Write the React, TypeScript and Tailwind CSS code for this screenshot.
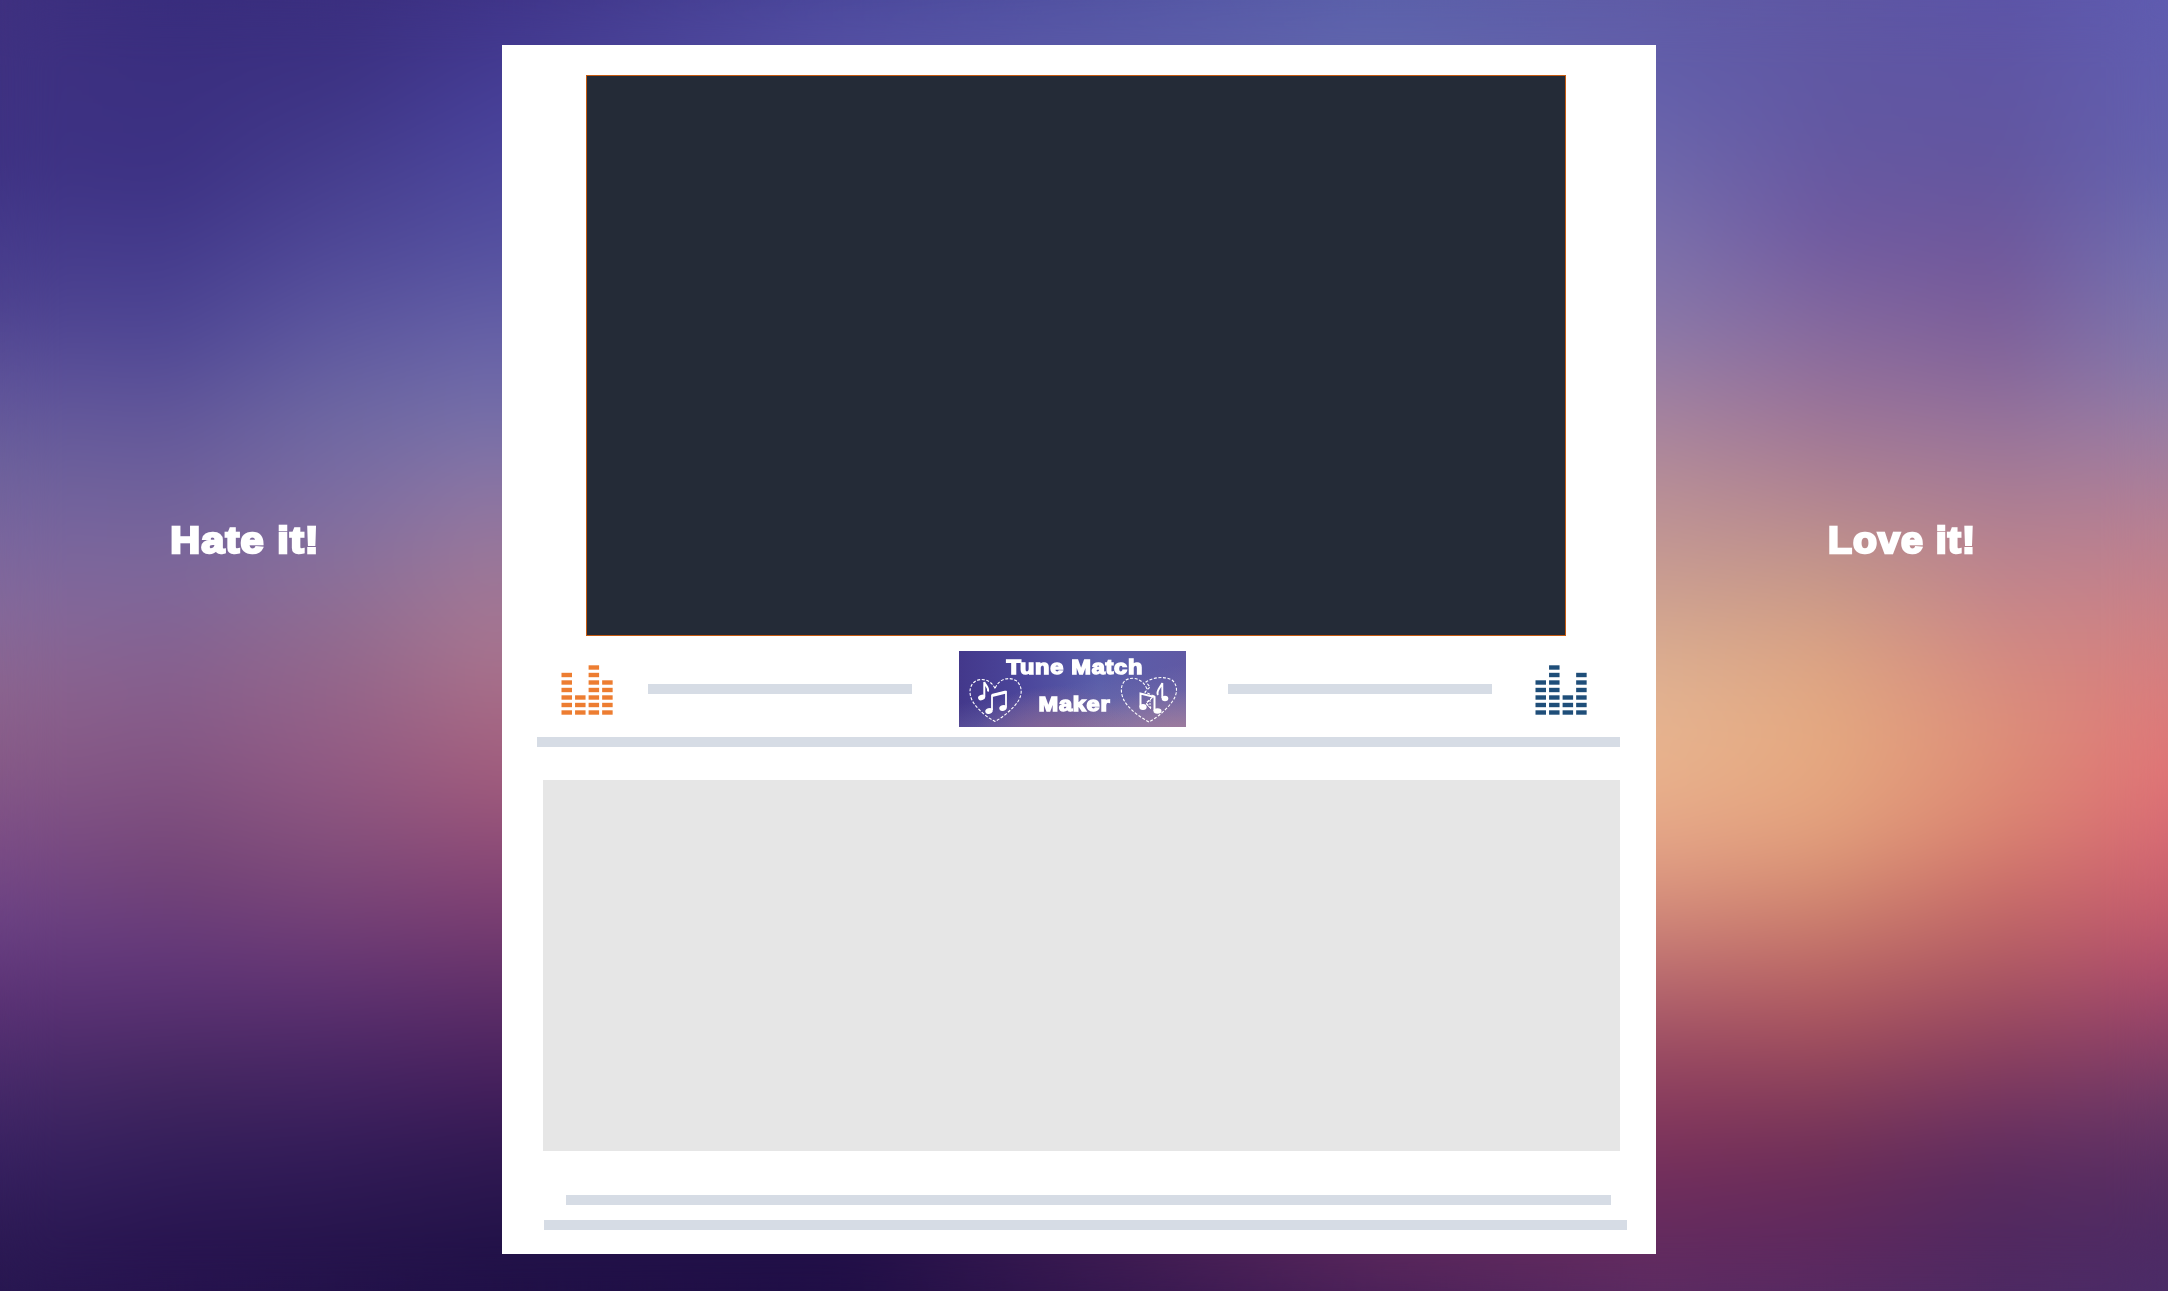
const HEART =
  "M26 11 C22 2 12 0 6 4 C-1 9 0 19 5 26 C10 33 18 40 26 44 C35 39 44 31 49 24 C54 16 53 8 47 3 C40 -1 30 1 26 11 Z";

function Backdrop() {
  return (
    <div className="absolute inset-0" aria-hidden="true">
      <div className="absolute inset-0 bg-[linear-gradient(to_bottom,#3f3180_0px,#3f3384_165px,#44398a_220px,#4c418f_295px,#5f549a_390px,#6d619c_466px,#7a669e_540px,#85699a_614px,#8b648f_690px,#875b88_760px,#7a4c86_850px,#6b4284_920px,#5a3275_1005px,#472a6a_1085px,#372160_1165px,#2c1a54_1245px,#281751_1291px)]" />
      <div className="absolute inset-0 bg-[linear-gradient(to_bottom,#392d7d_0px,#3d3284_175px,#453c8d_257px,#504895_339px,#62579a_420px,#71629b_500px,#7e679a_580px,#87608e_680px,#835583_770px,#744578_870px,#64397a_950px,#573070_1010px,#41265f_1090px,#331e5a_1160px,#291551_1235px,#26134e_1291px)] mask-[linear-gradient(to_right,transparent_0px,black_167px)]" />
      <div className="absolute inset-0 bg-[linear-gradient(to_bottom,#3b2f7f_0px,#3d3384_82px,#453d8d_165px,#4f4897_247px,#5d579f_329px,#6d67a2_412px,#7c6da2_494px,#88709c_560px,#906d92_617px,#94658a_690px,#925a83_770px,#85507c_840px,#764277_910px,#623472_980px,#4a2765_1060px,#331c58_1155px,#27154d_1235px,#23124a_1291px)] mask-[linear-gradient(to_right,transparent_167px,black_335px)]" />
      <div className="absolute inset-0 bg-[linear-gradient(to_bottom,#3f3488_0px,#48419a_123px,#5551a0_247px,#6a65a8_354px,#7971a8_428px,#8b76a4_486px,#9c7899_560px,#a87690_642px,#a76a85_708px,#a05b7c_782px,#8a4876_864px,#753b70_930px,#5c2d67_1004px,#441f5c_1087px,#311952_1153px,#231349_1235px,#201047_1291px)] mask-[linear-gradient(to_right,transparent_335px,black_502px)]" />
      <div className="absolute inset-0 bg-[linear-gradient(to_bottom,#4a479b_0px,#5450a3_45px,#5450a3_400px,#a0607c_780px,#23104a_1200px,#200f46_1291px)] mask-[linear-gradient(to_right,transparent_502px,black_840px)]" />
      <div className="absolute inset-0 bg-[linear-gradient(to_bottom,#5b60aa_0px,#5f65ad_45px,#8b78a8_329px,#e9b38d_766px,#6b2c5d_1180px,#56265b_1254px,#4b2159_1291px)] mask-[linear-gradient(to_right,transparent_840px,black_1380px)]" />
      <div className="absolute inset-0 bg-[linear-gradient(to_bottom,#5f5ba6_0px,#635fab_82px,#6e67ab_165px,#7c70ab_247px,#8b78a8_329px,#a4829f_412px,#b98f96_494px,#c99c91_576px,#d6a98f_634px,#e3b391_700px,#e9b38d_766px,#e5a587_840px,#d58d7b_906px,#bd6e70_971px,#9a4a62_1054px,#7f345b_1136px,#6b2c5d_1202px,#5b2b62_1291px)] mask-[linear-gradient(to_right,transparent_1380px,black_1656px)]" />
      <div className="absolute inset-0 bg-[linear-gradient(to_bottom,#5e57a4_0px,#6258a2_123px,#6f5aa0_231px,#85699e_329px,#9b7498_412px,#b18491_494px,#c69789_576px,#dca383_659px,#e5a980_741px,#e3a17d_823px,#d48b72_889px,#c06e68_955px,#a8545f_1021px,#823c5a_1103px,#6b2d58_1169px,#5f295e_1235px,#562a62_1291px)] mask-[linear-gradient(to_right,transparent_1656px,black_1826px)]" />
      <div className="absolute inset-0 bg-[linear-gradient(to_bottom,#5c54a7_0px,#63569f_165px,#73599b_272px,#83649a_354px,#97739a_428px,#ae7f92_510px,#c4868b_593px,#d48b81_659px,#de9079_741px,#db8672_823px,#cb706a_889px,#ae5963_971px,#8b405f_1054px,#683060_1136px,#562a5e_1194px,#4d2963_1291px)] mask-[linear-gradient(to_right,transparent_1826px,black_1996px)]" />
      <div className="absolute inset-0 bg-[linear-gradient(to_bottom,#5f5cb0_0px,#6562ae_165px,#7370b0_263px,#8578ab_362px,#9c7da2_436px,#b77f93_527px,#cb8086_617px,#d97b7c_700px,#df7376_774px,#d56873_840px,#c55d6e_906px,#ae4d6c_971px,#8e4168_1037px,#6e3966_1103px,#5a2f63_1169px,#4e2b64_1235px,#4b2c68_1291px)] mask-[linear-gradient(to_right,transparent_1996px,black_2168px)]" />
      <div className="absolute inset-0 backdrop-blur-[28px]" />
    </div>
  );
}

function Equalizer({ levels, tone }: { levels: number[]; tone: string }) {
  return (
    <svg className={`mt-[2px] h-[50px] w-[52px] shrink-0 ${tone}`} viewBox="0 0 52 50" fill="currentColor">
      {levels.map((count, col) =>
        Array.from({ length: count }, (_, i) => (
          <rect key={`${col}-${i}`} x={0.5 + col * 13.55} y={45.3 - i * 7.5} width={10.5} height={4.4} />
        )),
      )}
    </svg>
  );
}

function Notes() {
  return (
    <g fill="white" stroke="white">
      <ellipse cx="3.6" cy="17.5" rx="3.6" ry="2.7" transform="rotate(-20 3.6 17.5)" stroke="none" />
      <path d="M6.3 17 V2 C7 5 11 7 10 11.5" fill="none" strokeWidth="2" />
      <ellipse cx="11" cy="31" rx="3.8" ry="2.8" transform="rotate(-20 11 31)" stroke="none" />
      <ellipse cx="25" cy="28" rx="3.8" ry="2.8" transform="rotate(-20 25 28)" stroke="none" />
      <path d="M14 30 V15.5 L28 12 V27.5" fill="none" strokeWidth="1.8" />
      <path d="M14 15.5 L28 12" fill="none" strokeWidth="3" />
    </g>
  );
}

function Logo() {
  return (
    <div className="relative flex h-[76px] w-[227px] shrink-0 flex-col items-center overflow-hidden bg-[radial-gradient(ellipse_at_100%_125%,#ad8098_0%,transparent_42%),radial-gradient(ellipse_at_42%_125%,#8d6690_0%,transparent_45%),linear-gradient(170deg,transparent_45%,#7d74aa_110%),linear-gradient(to_right,#43388b_0%,#4c479c_30%,#5a5eaa_62%,#6059a4_100%)] font-['Liberation_Sans',sans-serif] text-[20px] font-bold tracking-[0.6px] text-white">
      <svg className="absolute inset-0 h-full w-full" viewBox="0 0 227 76">
        <path d={HEART} transform="translate(10 26.5)" fill="none" stroke="white" strokeWidth="1.1" strokeDasharray="3 1.6" />
        <g transform="translate(19 29)">
          <Notes />
        </g>
        <path
          d="M188 38 C184 28 174 25 167 29 C160 34 162 45 166 51 C172 60 181 66 190 71 C199 66 207 59 213 51 C219 43 219 34 213 29 C205 25 195 26 187 31 L191 36 L186 41 L195 45 L187 52 L192 57"
          fill="none"
          stroke="white"
          strokeWidth="1.1"
          strokeDasharray="3 1.6"
        />
        <g fill="white" stroke="white">
          <ellipse cx="184" cy="56" rx="3.7" ry="2.9" stroke="none" />
          <ellipse cx="198.5" cy="60" rx="4" ry="2.8" stroke="none" />
          <ellipse cx="206" cy="47.5" rx="3.3" ry="2.7" stroke="none" />
          <path d="M181.5 56 V42.5 L195.5 46 V60" fill="none" strokeWidth="2" />
          <path d="M203.3 47 V32 C202 36 196.5 40 199 44" fill="none" strokeWidth="1.9" />
          <path d="M192 48 L187 53 L192 58 M191 49 V57" fill="none" strokeWidth="1" strokeDasharray="2 1" />
        </g>
      </svg>
      <span className="relative mt-[6px] ml-1 scale-x-[1.18] leading-5 whitespace-nowrap [-webkit-text-stroke:1.4px_white]">
        Tune Match
      </span>
      <span className="relative mt-[17px] ml-1 scale-x-[1.18] leading-5 whitespace-nowrap [-webkit-text-stroke:1.4px_white]">
        Maker
      </span>
    </div>
  );
}

function Verdict({ children, stretch }: { children: string; stretch: string }) {
  return (
    <button
      className={`font-['Liberation_Sans',sans-serif] text-[36px] leading-[48px] font-bold tracking-[1px] whitespace-nowrap text-white [-webkit-text-stroke:2.4px_white] ${stretch}`}
    >
      {children}
    </button>
  );
}

export default function App() {
  return (
    <main className="relative h-[1291px] w-[2168px] overflow-hidden">
      <Backdrop />
      <div className="relative flex h-full items-start">
        <aside className="flex w-[502px] justify-center pt-[517px] pr-[11px]">
          <Verdict stretch="scale-x-[1.15]">Hate it!</Verdict>
        </aside>

        <section className="mt-[45px] flex h-[1209px] w-[1154px] shrink-0 flex-col bg-white pt-[30px]">
          <div className="ml-[84px] h-[561px] w-[980px] border border-[#c55a11] bg-[#242b37]" />
          <div className="mt-[15px] ml-[59px] flex h-[76px] w-[1026px] items-center">
            <div className="flex items-center gap-[35px]">
              <Equalizer levels={[6, 3, 7, 5]} tone="text-[#ed7d31]" />
              <div className="h-[10px] w-[264px] bg-[#d6dce5]" />
            </div>
            <div className="mr-[42px] ml-[47px]">
              <Logo />
            </div>
            <div className="flex items-center gap-[43px]">
              <div className="h-[10px] w-[264px] bg-[#d6dce5]" />
              <Equalizer levels={[5, 7, 3, 6]} tone="text-[#1f4e79]" />
            </div>
          </div>
          <div className="mt-[10px] ml-[35px] h-[10px] w-[1083px] bg-[#d6dce5]" />
          <div className="mt-[33px] ml-[41px] h-[371px] w-[1077px] bg-[#e6e6e6]" />
          <div className="mt-[44px] ml-[64px] h-[10px] w-[1045px] bg-[#d6dce5]" />
          <div className="mt-[15px] ml-[42px] h-[10px] w-[1083px] bg-[#d6dce5]" />
        </section>

        <aside className="flex w-[512px] justify-center pt-[517px] pr-[19px]">
          <Verdict stretch="scale-x-[1.09]">Love it!</Verdict>
        </aside>
      </div>
    </main>
  );
}
